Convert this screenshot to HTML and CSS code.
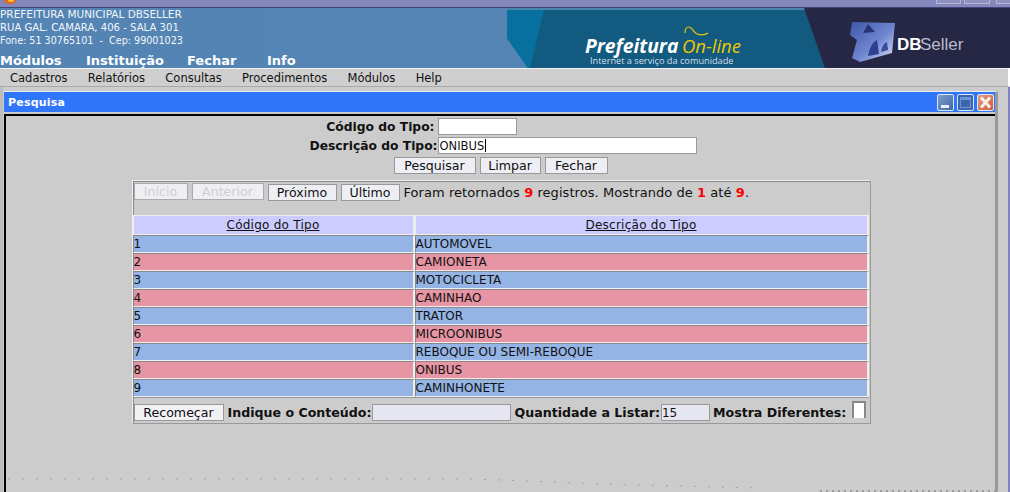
FILE: index.html
```html
<!DOCTYPE html>
<html lang="pt">
<head>
<meta charset="utf-8">
<title>Pesquisa</title>
<link rel="stylesheet" href="styles.css">
</head>
<body>
<div class="topstrip">
  <svg class="appicon" width="14" height="4" viewBox="0 0 14 4"><ellipse cx="8" cy="0" rx="6" ry="4" fill="#e8641c"/><ellipse cx="9" cy="0" rx="3" ry="2" fill="#f4c430"/></svg>
  <div class="tabs"><span class="tab t1"></span><span class="tab t2"></span><span class="tab t3"></span></div>
</div>
<header class="banner">
  <div class="inst">
    <div class="addr">
      <div class="a1">PREFEITURA MUNICIPAL DBSELLER</div>
      <div class="a2">RUA GAL. CAMARA, 406 - SALA 301</div>
      <div class="a3">Fone: 51 30765101 &nbsp;- &nbsp;Cep: 99001023</div>
    </div>
    <nav class="mainnav"><span class="n1">Módulos</span><span class="n2">Instituição</span><span class="n3">Fechar</span><span>Info</span></nav>
  </div>
  <div class="logo">
    <svg class="logosvg" width="503" height="60" viewBox="0 0 503 60">
      <defs>
        <linearGradient id="cube" x1="0" y1="0" x2="1" y2="1">
          <stop offset="0" stop-color="#3f56a8"/>
          <stop offset="0.55" stop-color="#6f86cf"/>
          <stop offset="1" stop-color="#dfe6fa"/>
        </linearGradient>
      </defs>
      <polygon points="0,2 503,2 503,60 21,60 0,30" fill="#125a80"/>
      <rect x="0" y="0" width="329" height="2" fill="#4a86ab"/>
      <polygon points="0,2 37,2 23,60 21,60 0,30" fill="#08709f"/>
      <polygon points="297,0 503,0 503,60 318,60" fill="#262645"/>
      <path d="M178 25 c0 -4 2 -6 4 -6 c3 0 4 5 8 7 c3 1 8 1 11 -1" fill="none" stroke="#eec900" stroke-width="1.2"/>
      <polygon points="345,14 388,15 385,45 353,54 345,50 350,32 343,27" fill="url(#cube)"/>
      <polygon points="361,16 368,24 356,25" fill="#2a3378"/>
      <path d="M361 48 c1 -8 5 -14 9 -16 l2 14 Z" fill="#2f3f92"/>
      <path d="M374 44 c1 -6 3 -9 6 -10 l1 8 Z" fill="#3a4ca0"/>
      <text class="lg-pref" x="78" y="45">Prefeitura</text>
      <text class="lg-on" x="175" y="45">On-line</text>
      <text class="lg-sub" x="83" y="56">Internet a serviço da comunidade</text>
      <text class="lg-db" x="390" y="42">DB</text>
      <text class="lg-seller" x="413" y="42">Seller</text>
    </svg>
  </div>
</header>
<nav class="menubar"><span>Cadastros</span><span>Relatórios</span><span>Consultas</span><span>Procedimentos</span><span>Módulos</span><span>Help</span></nav>
<main class="desk">
  <section class="window">
    <div class="titlebar">
      <span class="wtitle">Pesquisa</span>
      <div class="wbtns">
        <span class="wbtn wmin"><svg width="17" height="17" viewBox="0 0 17 17"><rect x="4" y="11" width="8" height="3" fill="#e8eefc"/></svg></span>
        <span class="wbtn wmax"><svg width="17" height="17" viewBox="0 0 17 17"><rect x="3.500" y="3.500" width="10" height="10" fill="none" stroke="#6f94cf"/><rect x="4" y="4" width="9" height="2" fill="#6f94cf"/></svg></span>
        <span class="wbtn wclose"><svg width="17" height="17" viewBox="0 0 17 17"><path d="M4 3.500 L13 13.500 M13 3.500 L4 13.500" stroke="#f6f0ee" stroke-width="3"/></svg></span>
      </div>
    </div>
    <div class="content">
      <form class="search">
        <div class="fields">
          <label class="lbl lbl-r">Código do Tipo:</label><span class="inp inp-cod"></span>
          <label class="lbl lbl-r lbl-tight">Descrição do Tipo:</label><span class="inp inp-desc">ONIBUS<i class="caret"></i></span>
        </div>
        <div class="frow-btn"><span class="btn b-pesq">Pesquisar</span><span class="btn b-limp">Limpar</span><span class="btn b-fech">Fechar</span></div>
      </form>
      <div class="results">
        <div class="pager">
          <span class="btn dis b-ini">Início</span><span class="btn dis b-ant">Anterior</span><span class="btn b-pro">Próximo</span><span class="btn b-ult">Último</span>
          <span class="count">Foram retornados <b>9</b> registros. Mostrando de <b>1</b> até <b>9</b>.</span>
        </div>
        <table class="grid">
          <thead><tr><th class="c1"><u>Código do Tipo</u></th><th><u>Descrição do Tipo</u></th></tr></thead>
          <tbody>
            <tr class="blue"><td>1</td><td>AUTOMOVEL</td></tr>
            <tr class="red"><td>2</td><td>CAMIONETA</td></tr>
            <tr class="blue"><td>3</td><td>MOTOCICLETA</td></tr>
            <tr class="red"><td>4</td><td>CAMINHAO</td></tr>
            <tr class="blue"><td>5</td><td>TRATOR</td></tr>
            <tr class="red"><td>6</td><td>MICROONIBUS</td></tr>
            <tr class="blue"><td>7</td><td>REBOQUE OU SEMI-REBOQUE</td></tr>
            <tr class="red"><td>8</td><td>ONIBUS</td></tr>
            <tr class="blue"><td>9</td><td>CAMINHONETE</td></tr>
          </tbody>
        </table>
        <div class="foot">
          <span class="btn b-rec">Recomeçar</span>
          <label class="lbl l-ind">Indique o Conteúdo:</label><span class="inp lilac i-con"></span>
          <label class="lbl l-qtd">Quantidade a Listar:</label><span class="inp lilac i-qtd">15</span>
          <label class="lbl l-mos">Mostra Diferentes:</label><span class="chk"></span>
        </div>
      </div>
    </div>
  </section>
</main>
<svg class="noise" width="1010" height="492" viewBox="0 0 1010 492">
  <path d="M8 479 L420 479 L470 479 L500 480 L600 484 L760 488" fill="none" stroke="#a2a2a2" stroke-width="1" stroke-dasharray="2 12"/>
  <path d="M820 491 L1000 491" fill="none" stroke="#9a9a9a" stroke-width="2" stroke-dasharray="2 4"/>
</svg>
</body>
</html>
```
FILE: styles.css
```css
* { box-sizing: border-box; }
html, body { margin: 0; padding: 0; height: 492px; overflow: hidden; }
body { background: #cccccc; font-family: "DejaVu Sans", sans-serif; font-size: 12px; color: #111; position: relative; }

.topstrip { height: 8px; background: #8587bd; border-bottom: 1px solid #3f4677; display: flex; justify-content: space-between; align-items: flex-start; overflow: hidden; }
.appicon { display: block; margin-left: 2px; }
.tabs { display: flex; }
.tab { display: block; height: 4px; border: 1px solid #b6b7cf; border-top: 0; background: #8f91c2; }
.t1 { width: 25px; margin-right: 3px; }
.t2 { width: 26px; margin-right: 6px; }
.t3 { width: 14px; border-right: 0; }

.banner { height: 60px; background: linear-gradient(90deg, #5484b3 0%, #5585b4 80%, #6c98c2 100%); display: flex; justify-content: space-between; color: #fff; }
.inst { display: flex; flex-direction: column; }
.addr { line-height: 13px; height: 46px; color: #f2f6fa; white-space: nowrap; }
.a1 { font-size: 10.500px; }
.a2 { font-size: 10.100px; }
.a3 { font-size: 9.600px; }
.mainnav { font-size: 13px; font-weight: bold; line-height: 14px; white-space: nowrap; }
.mainnav span { display: inline-block; }
.n1 { width: 86px; }
.n2 { width: 101px; }
.n3 { width: 80px; }
.logo { width: 503px; height: 60px; }
.logosvg { display: block; }
.lg-pref { font: italic bold 19.300px "Open Sans", sans-serif; fill: #fff; }
.lg-on { font: italic 18.500px "Open Sans", sans-serif; fill: #eec900; }
.lg-sub { font: 9.200px "Open Sans", sans-serif; fill: #d5dfe8; }
.lg-db { font: bold 17px "Liberation Sans", sans-serif; fill: #fff; }
.lg-seller { font: 17px "Liberation Sans", sans-serif; fill: #b9bccb; }

.menubar { height: 19px; background: #cfcfcf; border-top: 1px solid #f2f2f2; border-bottom: 1px solid #a9a9a9; border-right: 2px solid #fff; display: flex; padding-left: 10px; gap: 20.300px; font-size: 11.500px; line-height: 18px; }
.desk { padding: 4px 10px 0 1px; border-left: 3px solid #bcbcbc; border-right: 2px solid #8283c0; height: 405px; }

.window { height: 401px; border-top: 1px solid #ececec; border-right: 3px solid #999; }
.titlebar { height: 20px; margin-bottom: 2px; background: #2f76fb; display: flex; justify-content: space-between; align-items: center; padding: 0 1px 0 4px; }
.wtitle { color: #fff; font-weight: bold; font-size: 11px; letter-spacing: 0.200px; }
.wbtns { display: flex; gap: 3px; }
.wbtn { width: 17px; height: 17px; border: 1px solid #dbe6f7; border-radius: 2px; display: block; }
.wbtn svg { display: block; margin: -1px; }
.wmin { background: linear-gradient(135deg, #7ea0cc, #3f68ae); }
.wmax { background: #3a66ae; }
.wclose { background: linear-gradient(135deg, #e3a080, #d3583d); }

.content { height: 378px; border-top: 2px solid #000; border-left: 2px solid #000; padding-top: 2px; display: flex; flex-direction: column; align-items: center; }
.search { display: flex; flex-direction: column; align-items: center; width: 100%; }
.fields { display: grid; grid-template-columns: auto 259px; row-gap: 2px; align-items: center; margin-left: 5px; }
.lbl { font-weight: bold; font-size: 12.300px; white-space: nowrap; }
.lbl-r { text-align: right; padding-right: 3px; }
.lbl-tight { padding-right: 0; }
.inp { display: block; height: 17px; border: 1px solid #999; background: #fff; font-size: 12px; line-height: 16px; white-space: nowrap; }
.inp-cod { width: 79px; }
.inp-desc { width: 259px; font-size: 11.500px; padding-left: 1px; }
.caret { display: inline-block; width: 1px; height: 13px; margin-left: 1px; background: #000; vertical-align: -2px; }
.btn { display: block; height: 17px; border: 1px solid #999; background: #eeeff4; font-size: 12.600px; line-height: 16px; text-align: center; white-space: nowrap; }
.frow-btn { display: flex; gap: 4px; margin-top: 3px; }
.b-pesq { width: 82px; }
.b-limp { width: 61px; }
.b-fech { width: 63px; }

.results { width: 739px; height: 244px; margin: 6px 0 0 1px; border: 1px solid; border-color: #eeeeee #999999 #999999 #eeeeee; box-shadow: inset 1px 1px 0 #8a8a8a; padding: 1px 1px 1px 0; }
.pager { height: 33px; display: flex; gap: 4px; padding: 1px 0 0 1px; align-items: flex-start; }
.dis { color: #cfcfcf; border-color: #aaa; background: #eeeff3; }
.b-ini { width: 54px; }
.b-ant { width: 72px; }
.b-pro { width: 69px; margin-top: 1px; }
.b-ult { width: 59px; margin-top: 1px; }
.count { font-size: 13px; line-height: 20px; white-space: nowrap; letter-spacing: 0.060px; }
.count b { color: #f00; }

.grid { width: 736px; border-collapse: separate; border-spacing: 0; table-layout: fixed; font-size: 12px; }
.grid th { height: 20px; background: #ccccff; font-weight: normal; border: 1px solid #eee; border-right-width: 2px; padding: 0; line-height: 18px; letter-spacing: 0.250px; }
.grid .c1 { width: 282px; }
.grid td { height: 18px; padding: 0; line-height: 15px; white-space: nowrap; border: 1px solid #eee; border-top-color: #888; border-left-color: #888; border-right-width: 2px; }
.blue td { background: #94b4e5; }
.red td { background: #e795a4; }

.foot { display: flex; align-items: flex-start; height: 25px; border-top: 1px solid #999; padding: 6px 0 0 1px; white-space: nowrap; position: relative; }
.foot .lbl { font-size: 12.600px; line-height: 17px; }
.b-rec { width: 90px; background: #f0f0f5; }
.l-ind { margin-left: 4px; }
.i-con { width: 139px; }
.l-qtd { margin-left: 4px; }
.i-qtd { width: 49px; margin-left: 1px; }
.l-mos { margin-left: 3px; }
.lilac { background: #e6e6f3; }
.chk { position: absolute; right: 3px; top: 3px; width: 14px; height: 17px; background: #fff; border: 1px solid; border-color: #888; border-width: 2px 2px 0 2px; }

.noise { position: absolute; left: 0; top: 0; pointer-events: none; }
```
